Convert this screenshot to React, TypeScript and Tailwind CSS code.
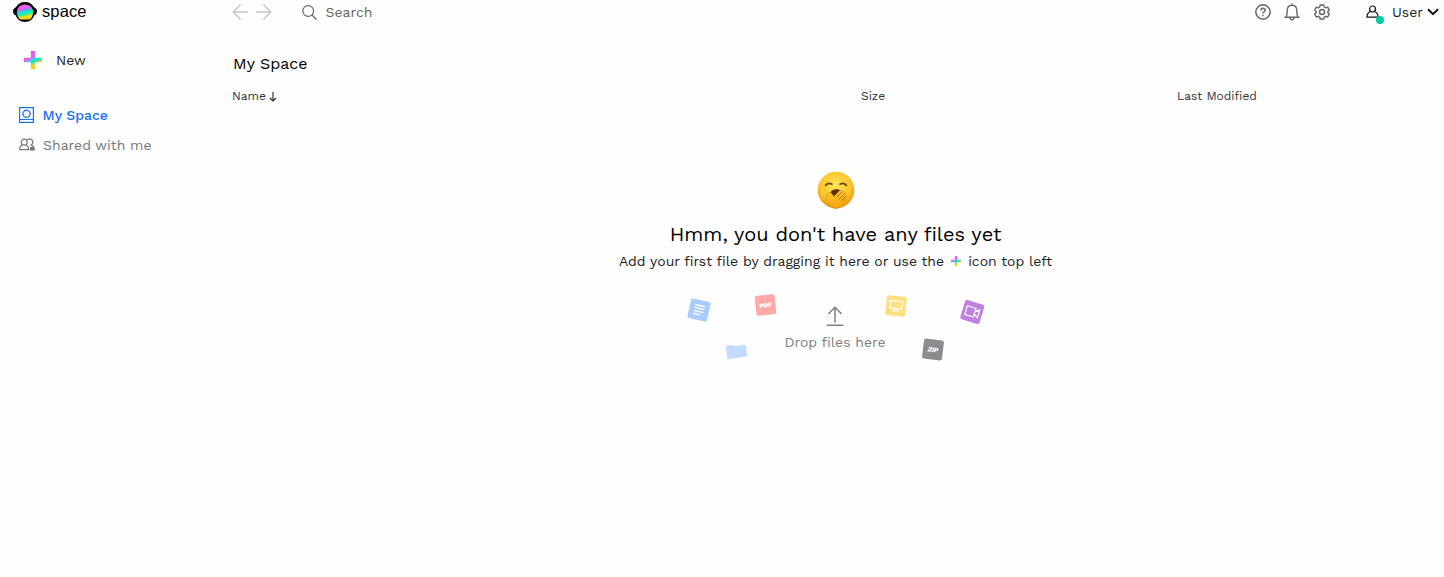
import React from 'react';

function SpaceLogo() {
  return (
    <svg width="24" height="20" viewBox="0 0 24 20" className="shrink-0">
      <defs>
        <linearGradient id="logo-fill" x1="0.35" y1="0" x2="0.6" y2="1">
          <stop offset="0.2" stopColor="#ee5cf0" />
          <stop offset="0.36" stopColor="#b07af0" />
          <stop offset="0.46" stopColor="#16dfd0" />
          <stop offset="0.64" stopColor="#20efb0" />
          <stop offset="0.8" stopColor="#f2dc18" />
          <stop offset="1" stopColor="#ffd000" />
        </linearGradient>
      </defs>
      <path d="M12 0C16.5 0 19.3 2.1 20.8 4.9C23 6 24 7.4 24 9.2C24 11 23 12.6 21.3 13.3C19.8 17.4 16.5 20 12 20C7.500 20 4.200 17.400 2.700 13.300C1 12.600 0 11 0 9.200C0 7.400 1 6 3.200 4.900C4.700 2.100 7.500 0 12 0Z" fill="#000" />
      <path d="M12 2.400C17 2.400 20.200 6 20.200 10C20.200 12.800 19 15.500 16.800 17.500H7.200C5 15.500 3.800 12.800 3.800 10C3.800 6 7 2.400 12 2.400Z" fill="url(#logo-fill)" />
    </svg>
  );
}

function Plus({ size, id }: { size: number; id: string }) {
  return (
    <svg width={size} height={size} viewBox="0 0 18 18" className="inline-block shrink-0">
      <defs>
        <linearGradient id={id} gradientUnits="userSpaceOnUse" x1="5" y1="1" x2="13" y2="17">
          <stop offset="0.3" stopColor="#e65cee" />
          <stop offset="0.42" stopColor="#a98cec" />
          <stop offset="0.49" stopColor="#10e4d4" />
          <stop offset="0.62" stopColor="#20e8b8" />
          <stop offset="0.76" stopColor="#e8d828" />
          <stop offset="1" stopColor="#ffc400" />
        </linearGradient>
      </defs>
      <path d="M6.800 0H11.200V6.800H18V11.200H11.200V18H6.800V11.200H0V6.800H6.800Z" fill={`url(#${id})`} />
    </svg>
  );
}

function Header() {
  return (
    <header className="flex h-6 shrink-0 items-center">
      <div className="flex w-[232px] items-center gap-[5px] pl-[13px]">
        <SpaceLogo />
        <span className="-mt-[3px] font-['Liberation_Sans',sans-serif] text-[16.500px] leading-5 tracking-[.1px] text-black">space</span>
      </div>
      <svg width="40" height="16" viewBox="0 0 40 16" fill="none" stroke="#c6c6c6" strokeWidth="1.500" className="shrink-0">
        <path d="M16 8H1.500M8.500 .800L1.300 8L8.500 15.200M24 8H38.500M31.500 .800L38.700 8L31.500 15.200" />
      </svg>
      <svg width="15" height="15" viewBox="0 0 15 15" fill="none" stroke="#666" strokeWidth="1.200" className="ml-[30px] shrink-0">
        <circle cx="6.200" cy="6" r="5.400" />
        <path d="M10 10L14.500 14.500" />
      </svg>
      <span className="-mt-px ml-[8.500px] text-[14px] leading-5 text-[#666]">Search</span>
      <div className="ml-auto flex items-center text-[#666]">
        <svg width="16" height="16" viewBox="0 0 16 16" fill="none" stroke="currentColor" strokeWidth="1.500">
          <circle cx="8" cy="8" r="7.200" />
          <path d="M5.900 6.400C5.900 3.700 10.200 3.700 10.200 6.200C10.200 7.800 8 7.700 8 9.500M8 10.800V12.300" />
        </svg>
        <svg width="16" height="18" viewBox="0 0 16 18" fill="none" stroke="currentColor" strokeWidth="1.400" className="ml-[13px]">
          <path d="M8 .400V2M.500 14.200H15.500M1.700 14.200C3.200 12.700 3.200 11 3.200 7.500C3.200 4 5.300 2.200 8 2.200C10.700 2.200 12.800 4 12.800 7.500C12.800 11 12.800 12.700 14.300 14.200M6 14.200C6 17.700 10 17.700 10 14.200" />
        </svg>
        <svg width="16" height="16" viewBox="0 0 16 16" fill="none" stroke="currentColor" strokeWidth="1.400" strokeLinejoin="round" className="ml-[14px]">
          <path d="M6.200 1H9.800L10.300 3L11.800 3.800L13.700 3.100L15.300 6L13.900 7.400V8.700L15.300 10.100L13.700 13L11.800 12.300L10.300 13.100L9.800 15H6.200L5.700 13.100L4.200 12.300L2.300 13L.700 10.100L2.100 8.700V7.400L.700 6L2.300 3.100L4.200 3.800L5.700 3Z" />
          <circle cx="8" cy="8" r="2.500" />
        </svg>
        <svg width="19" height="20" viewBox="0 0 19 20" fill="none" className="ml-[35px] mt-1">
          <g stroke="#111" strokeWidth="1.200">
            <circle cx="7.500" cy="5" r="3" />
            <path d="M5.400 7.500C3 8.500 1.900 10 1.900 13.200H13.100C13.100 10 12 8.500 9.600 7.500" />
          </g>
          <circle cx="15" cy="16" r="4" fill="#00cba4" />
        </svg>
        <span className="-mt-px ml-[8px] text-[14px] leading-5 text-[#222]">User</span>
        <svg width="12" height="8" viewBox="0 0 12 8" fill="none" stroke="#111" strokeWidth="2" className="ml-[3.500px] mr-[5.500px]">
          <path d="M1 1.200L6 6.200L11 1.200" />
        </svg>
      </div>
    </header>
  );
}

function Sidebar() {
  return (
    <nav className="flex w-[232px] shrink-0 flex-col pt-[21px]">
      <div className="flex h-[30px] items-center gap-[14px] pl-6">
        <Plus size={18} id="plus-new" />
        <span className="-mt-px text-[14px] leading-5 text-[#222]">New</span>
      </div>
      <div className="mt-[25px] flex h-[30px] items-center gap-[8.500px] pl-[19px] text-[#1571f3]">
        <svg width="15" height="16" viewBox="0 0 15 16" fill="none" stroke="currentColor">
          <rect x=".600" y=".600" width="13.800" height="14.800" strokeWidth="1.200" />
          <path d="M1 12.500H14" />
          <path d="M7.500 3.100C9.200 3.100 10.200 3.800 10.700 5.200Q12 6.700 10.700 8.100C10.200 9.700 9.200 10.400 7.500 10.400C5.800 10.400 4.800 9.700 4.300 8.100Q3 6.700 4.300 5.200C4.800 3.800 5.800 3.100 7.500 3.100Z" strokeWidth="1.300" />
        </svg>
        <span className="-mt-px text-[14px] font-medium leading-5">My Space</span>
      </div>
      <div className="flex h-[30px] items-center gap-2 pl-[19px] text-[#74787c]">
        <svg width="16" height="14" viewBox="0 0 16 14" fill="none" stroke="currentColor" strokeWidth="1.200">
          <circle cx="5.200" cy="4.200" r="3" />
          <path d="M3.600 6.900C1.500 7.600 .700 9 .700 11.700H9.700C9.700 9 8.900 7.600 6.800 6.900M8.200 1.700C10.500-.200 14 1.200 14 4.100C14 5.500 13.200 6.400 12.200 7C13.900 7.600 14.700 8.300 15 9.500" />
          <path d="M11 12.500V9.500L13 8.500L15.800 9.500V12.500Z" fill="currentColor" stroke="none" />
        </svg>
        <span className="-mt-px text-[14px] leading-5">Shared with me</span>
      </div>
    </nav>
  );
}

function Yawn() {
  return (
    <svg width="38" height="38" viewBox="0 0 38 38">
      <defs>
        <radialGradient id="face" cx=".48" cy=".38" r=".62">
          <stop offset="0" stopColor="#ffe45c" />
          <stop offset=".65" stopColor="#fcc62c" />
          <stop offset="1" stopColor="#e99708" />
        </radialGradient>
        <linearGradient id="hand" x1="0" y1="0" x2="0" y2="1">
          <stop stopColor="#ffd12f" />
          <stop offset="1" stopColor="#f0a010" />
        </linearGradient>
      </defs>
      <circle cx="19" cy="19" r="18.300" fill="url(#face)" />
      <path d="M8.500 14.500C10 12.500 12.500 11.800 15 13.200M23 13.200C25.500 11.800 28 12.500 29.500 14.500" fill="none" stroke="#6b4307" strokeWidth="1.600" strokeLinecap="round" />
      <path d="M13.500 21.500C15 17.800 21 17.500 23.500 19.500L20 26H16Z" fill="#5b2a08" />
      <path d="M10 29.500C8.500 25 10.500 21 13 21.500C14.500 21.800 15 24 17 25.500L22.600 19.700C24 18.800 25.200 20 24.600 21.200L26.200 20.500C27.700 20.400 28.200 21.700 27.400 23C29 22.700 29.700 24.100 28.800 25.500C29.900 25.800 29.800 27.400 28.800 28.500L25.500 34C21.500 39.500 12 38.500 10 29.500Z" fill="url(#hand)" stroke="#dc8b0d" strokeWidth=".700" />
      <path d="M19.500 26.500L24.500 21.300M22 28.200L27.300 23M24 30.300L28.700 25.500" fill="none" stroke="#a05c08" strokeWidth="1" />
    </svg>
  );
}

function DropZone() {
  return (
    <div className="relative flex h-[72px] w-[300px] flex-col items-center pt-[14px] text-[#808080]">
      <svg width="18" height="20" viewBox="0 0 18 20" fill="none" stroke="currentColor" strokeWidth="1.500">
        <path d="M9 16.500V1.400M2.400 8L9 1.300L15.600 8M.800 19.200H17.200" />
      </svg>
      <span className="mt-[6px] pl-px text-[14px] leading-5">Drop files here</span>
      <svg width="300" height="72" viewBox="0 0 300 72" fill="none" className="absolute left-0 top-0">
        <g transform="translate(14 18) rotate(13)">
          <rect x="-10" y="-10" width="20" height="20" rx="2" fill="#a9cbff" />
          <path d="M-5-4.500H5M-5-1.500H5M-5 1.500H5M-5 4.500H2" stroke="#fff" strokeWidth="1.400" />
        </g>
        <g transform="translate(80.500 13) rotate(-6)">
          <rect x="-10" y="-10" width="20" height="20" rx="2" fill="#ffaaa8" />
          <text y="2.300" textAnchor="middle" fill="#fff" fontSize="6.200" fontWeight="800" fontFamily="Work Sans, sans-serif">PDF</text>
        </g>
        <g transform="translate(211 14) rotate(6)">
          <rect x="-10" y="-10" width="20" height="20" rx="2" fill="#ffe07c" />
          <path d="M-7-5H7M-5.800-5V2.500H5.800V-5M0 2.500V4.500M-3 6L0 4L3 6" stroke="#fff" strokeWidth="1.200" />
        </g>
        <g transform="translate(287.300 20) rotate(17)">
          <rect x="-10" y="-10" width="20" height="20" rx="2" fill="#c17fdf" />
          <path d="M-6.500-4.500H2.500V4.500H-6.500ZM2.500-1.500L6.500-4V4L2.500 1.500" stroke="#fff" strokeWidth="1.200" />
        </g>
        <g transform="translate(51.500 59.500) rotate(-8)">
          <path d="M-10-6Q-10-7-9-7H-3L-1.500-5.500H9Q10-5.500 10-4.500V5Q10 6.500 8.500 6.500H-8.500Q-10 6.500-10 5Z" fill="#c4dbff" />
        </g>
        <g transform="translate(248 57.500) rotate(7)">
          <rect x="-10" y="-10" width="20" height="20" rx="2" fill="#8c8c8c" />
          <text y="2.300" textAnchor="middle" fill="#fff" fontSize="6.500" fontWeight="800" fontStyle="italic" fontFamily="Work Sans, sans-serif">ZIP</text>
        </g>
      </svg>
    </div>
  );
}

export default function App() {
  return (
    <div className="flex h-[577px] w-full flex-col overflow-hidden bg-[#fefefe] font-['Work_Sans','Open_Sans',sans-serif]">
      <Header />
      <div className="flex flex-1">
        <Sidebar />
        <main className="flex flex-1 flex-col">
          <h1 className="mt-[29px] pl-px text-[16px] leading-[22px] text-black">My Space</h1>
          <div className="mt-3 flex h-[18px] items-center text-[12px] text-[#333]">
            <div className="flex w-[629px] items-center gap-[3px]">
              <span>Name</span>
              <svg width="8" height="10" viewBox="0 0 8 10" fill="none" stroke="currentColor" strokeWidth="1.200" className="mt-0.5">
                <path d="M4 0V9M1 6L4 9L7 6" />
              </svg>
            </div>
            <span className="w-[316px]">Size</span>
            <span>Last Modified</span>
          </div>
          <div className="flex w-[1207px] flex-col items-center pt-[66px]">
            <Yawn />
            <h2 className="mt-[11px] text-[20px] leading-7 text-black">Hmm, you don't have any files yet</h2>
            <p className="mt-[3px] flex items-center text-[14px] leading-5 text-[#222]">
              <span>Add your first file by dragging it here or use the</span>
              <span className="mx-[7px] flex"><Plus size={10} id="plus-inline" /></span>
              <span>icon top left</span>
            </p>
            <div className="mt-[21px] pr-0.5"><DropZone /></div>
          </div>
        </main>
      </div>
    </div>
  );
}
